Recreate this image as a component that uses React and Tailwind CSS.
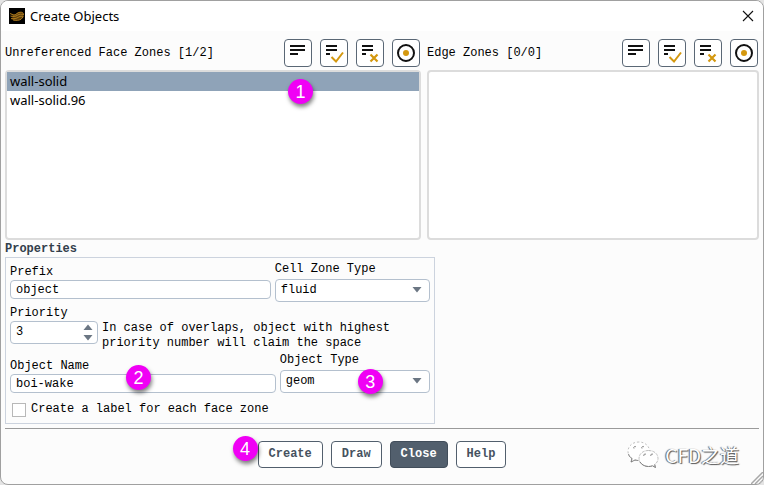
import React, { useState } from "react";

const faceZones = ["wall-solid", "wall-solid.96"];

const AppLogo = () => (
  <svg viewBox="0 0 16 16" className="h-4 w-4 bg-black" aria-hidden="true">
    <path d="M1 5.500l4 1.500 5-3 3.500 0.500 1.500 2-1 3-3 2.500-5 0.500-4-1.500 2-1-2.500-1.500 2.500-0.500z" fill="#5c3f0c" />
    <g fill="none" stroke="#c48a22" strokeWidth="0.8">
      <path d="M1 5.500l4 1.500c2 0 3-2.500 6-2.800s3.500 1.300 3.500 2.800" />
      <path d="M1.500 8c3 .8 5 .6 7-.8s4-1.200 5.500-.2" />
      <path d="M2 10.500c3 .6 5.500 0 7.500-1.300s3.500-1.200 4.500-.2" />
      <path d="M4 12c3 .8 6 .5 8-.7l2.500-2.800" />
    </g>
  </svg>
);

const ListLines = ({ mark }) => (
  <svg viewBox="0 0 26 26" className="h-[26px] w-[26px]" aria-hidden="true">
    <g stroke="#111" strokeWidth="2">
      <path d={mark ? "M5 6h11" : "M5 6h15"} />
      <path d={mark ? "M5 10h11" : "M5 10h15"} />
      <path d={mark ? "M5 14h4" : "M5 14h8"} />
    </g>
    {mark === "check" && (
      <path d="M10.500 17l4.500 4.500 7-9" fill="none" stroke="#d4980f" strokeWidth="2" />
    )}
    {mark === "cross" && (
      <path d="M13.500 14.500l7 7M20.500 14.500l-7 7" fill="none" stroke="#d4980f" strokeWidth="2.200" />
    )}
  </svg>
);

const TargetIcon = () => (
  <svg viewBox="0 0 26 26" className="h-[26px] w-[26px]" aria-hidden="true">
    <circle cx="13" cy="13" r="8" fill="none" stroke="#111" strokeWidth="2" />
    <circle cx="13" cy="13" r="3" fill="#d4980f" />
  </svg>
);

const IconButton = ({ label, children }) => (
  <button
    type="button"
    aria-label={label}
    className="flex h-7 w-7 items-center justify-center rounded border border-[#5a6775] bg-white"
  >
    {children}
  </button>
);

const ZoneToolbar = () => (
  <div className="flex gap-2">
    <IconButton label="List all">
      <ListLines />
    </IconButton>
    <IconButton label="Select all">
      <ListLines mark="check" />
    </IconButton>
    <IconButton label="Deselect all">
      <ListLines mark="cross" />
    </IconButton>
    <IconButton label="Highlight">
      <TargetIcon />
    </IconButton>
  </div>
);

const ZoneList = ({ title, items, selected, onSelect }) => (
  <>
    <div className="flex items-center justify-between pr-px">
      <h2>{title}</h2>
      <ZoneToolbar />
    </div>
    <ul
      role="listbox"
      aria-label={title}
      className="mt-[3px] h-[170px] rounded-sm border-2 border-[#dcdcdc] bg-white font-['Noto_Sans',sans-serif] text-[13px] leading-[19px]"
    >
      {items.map((item) => (
        <li
          key={item}
          role="option"
          aria-selected={item === selected}
          onClick={() => onSelect(item)}
          className={`px-[3px] ${item === selected ? "bg-[#8fa3b8]" : ""}`}
        >
          {item}
        </li>
      ))}
    </ul>
  </>
);

const Marker = ({ className, children }) => (
  <span
    className={`absolute flex h-[25px] w-[25px] items-center justify-center rounded-full bg-[#f000f5] font-['Liberation_Sans',sans-serif] text-[18px] leading-none text-white shadow-[1px_3px_4px_rgba(0,0,0,0.5)] ${className}`}
  >
    {children}
  </span>
);

const TextField = ({ id, label, defaultValue }) => (
  <div className="min-w-0 flex-1">
    <label htmlFor={id} className="block">
      {label}
    </label>
    <input
      id={id}
      type="text"
      defaultValue={defaultValue}
      className="block h-[19px] w-full rounded border border-[#b4c0ce] bg-white px-[5px]"
    />
  </div>
);

const SelectField = ({ id, label, options }) => (
  <div>
    <label htmlFor={id} className="mb-[2px] block">
      {label}
    </label>
    <div className="relative">
      <select
        id={id}
        className="block h-[23px] w-full appearance-none rounded border border-[#b4c0ce] bg-white px-[5px]"
      >
        {options.map((option) => (
          <option key={option}>{option}</option>
        ))}
      </select>
      <svg
        viewBox="0 0 10 6"
        className="pointer-events-none absolute top-2 right-2 h-[6px] w-[10px]"
        aria-hidden="true"
      >
        <path d="M0.500 0h9L5 5.500z" fill="#6b7683" />
      </svg>
    </div>
  </div>
);

const PriorityField = () => {
  const [priority, setPriority] = useState(3);

  return (
    <div className="mt-1">
      <label htmlFor="priority" className="block">
        Priority
      </label>
      <div className="flex items-start gap-1">
        <div className="flex h-[23px] w-[88px] shrink-0 rounded border border-[#b4c0ce] bg-white">
          <input
            id="priority"
            type="text"
            inputMode="numeric"
            value={priority}
            onChange={(e) => setPriority(Number(e.target.value) || 0)}
            className="min-w-0 flex-1 px-[5px]"
          />
          <div className="flex w-[14px] flex-col items-start justify-between py-[2px]">
            <button type="button" aria-label="Increase" onClick={() => setPriority(priority + 1)}>
              <svg viewBox="0 0 10 6" className="h-[6px] w-[10px]">
                <path d="M0.500 6h9L5 0.500z" fill="#6b7683" />
              </svg>
            </button>
            <button type="button" aria-label="Decrease" onClick={() => setPriority(priority - 1)}>
              <svg viewBox="0 0 10 6" className="h-[6px] w-[10px]">
                <path d="M0.500 0h9L5 5.500z" fill="#6b7683" />
              </svg>
            </button>
          </div>
        </div>
        <p>
          In case of overlaps, object with highest
          <br />
          priority number will claim the space
        </p>
      </div>
    </div>
  );
};

const ActionButton = ({ primary, children }) => (
  <button
    type="button"
    className={`h-[27px] rounded border px-[10px] font-bold ${
      primary
        ? "border-[#414d5a] bg-[#525f6d] text-white"
        : "border-[#525f6d] bg-white text-[#46525f]"
    }`}
  >
    {children}
  </button>
);

const Watermark = () => (
  <div className="flex items-center gap-[6px]">
    <svg viewBox="0 0 32 28" className="h-7 w-8" aria-hidden="true">
      <g fill="#fff" stroke="#b0b0b0" strokeWidth="0.8">
        <path
          d="M12 1C5.500 1 1 5 1 10.500c0 3 1.500 5.500 4 7L4 21l4-2c1.500.5 3 .6 5 .5C22 19 23 14 22.500 9 21.500 4 17 1 12 1z"
          strokeDasharray="2 2"
        />
        <path
          d="M21.500 9.500c-5.500 0-9.500 3.500-9.500 8s4 8 9.500 8c1.500 0 2.700-.2 4-.7l3 1.700-.8-3c2-1.500 3.300-3.500 3.300-6 0-4.500-4-8-9.500-8z"
          strokeDasharray="3 1"
        />
      </g>
      <path
        d="M1.500 13c.5 2 1.700 3.500 3.500 4.500L4 21l4-2 3 .5M13 21c2 3 5 4.500 8.500 4.500 1.500 0 2.700-.2 4-.7l3 1.700-.8-3"
        fill="none"
        stroke="#777"
        strokeWidth="0.9"
      />
      <g fill="none" stroke="#777" strokeWidth="0.9">
        <path d="M7 7.500a1.200 1.200 0 0 1 2-1.500M15 7.500a1.200 1.200 0 0 1 2-1.500" />
        <path d="M17 15a1.200 1.200 0 0 1 2-1.500M24 15a1.200 1.200 0 0 1 2-1.500" />
      </g>
    </svg>
    <span className="font-['Noto_Sans_CJK_SC',sans-serif] text-[19px] leading-6 text-white [text-shadow:-1px_0_1px_#555,1px_1px_1px_#555]">
      CFD之道
    </span>
  </div>
);

export default function App() {
  const [selected, setSelected] = useState("wall-solid");

  return (
    <div className="min-h-screen bg-[#e4e4e4]">
      <div className="relative flex min-h-screen flex-col overflow-hidden rounded-lg border border-[#a0a0a0] bg-[#fcfcfc] font-['Liberation_Mono',monospace] text-[12px] leading-[15px] text-black">
        <header className="flex h-[30px] items-center justify-between bg-white pr-[9px] pl-2">
          <div className="flex items-center gap-[5px]">
            <AppLogo />
            <h1 className="font-['Noto_Sans',sans-serif] text-[13px]">Create Objects</h1>
          </div>
          <button type="button" aria-label="Close window">
            <svg viewBox="0 0 12 12" className="h-3 w-3">
              <path d="M1 1l10 10M11 1L1 11" stroke="#111" strokeWidth="1.100" />
            </svg>
          </button>
        </header>

        <main className="px-1 pt-2">
          <div className="flex gap-[6px]">
            <section className="relative min-w-0 flex-[416]">
              <ZoneList
                title="Unreferenced Face Zones [1/2]"
                items={faceZones}
                selected={selected}
                onSelect={setSelected}
              />
              <Marker className="top-10 left-[283px]">1</Marker>
            </section>
            <section className="min-w-0 flex-[332]">
              <ZoneList title="Edge Zones [0/0]" items={[]} />
            </section>
          </div>

          <h2 className="mt-[2px] font-bold text-[#333f4c]">Properties</h2>
          <section className="w-[57%] border border-[#ccd3de] px-1 pt-1 pb-[6px]">
            <div className="flex items-center gap-1">
              <TextField id="prefix" label="Prefix" defaultValue="object" />
              <div className="w-[155px]">
                <SelectField id="cell-zone-type" label="Cell Zone Type" options={["fluid", "solid"]} />
              </div>
            </div>

            <PriorityField />

            <div className="mt-[2px] flex items-end gap-1">
              <div className="relative flex flex-1">
                <TextField id="object-name" label="Object Name" defaultValue="boi-wake" />
                <Marker className="top-[6px] left-[116px]">2</Marker>
              </div>
              <div className="relative w-[150px]">
                <SelectField id="object-type" label="Object Type" options={["geom", "mesh"]} />
                <Marker className="top-4 left-[78px]">3</Marker>
              </div>
            </div>

            <div className="mt-[9px] flex items-center gap-[5px] pl-[2px]">
              <input
                id="face-label"
                type="checkbox"
                className="h-[14px] w-[14px] appearance-none border border-[#b8b8b8] bg-white checked:bg-[#525f6d]"
              />
              <label htmlFor="face-label">Create a label for each face zone</label>
            </div>
          </section>
        </main>

        <footer className="mx-1 mt-1 grid grid-cols-[1fr_auto_1fr] items-center border-t border-[#9a9a9a] pt-2 pb-3">
          <div />
          <div className="relative flex gap-2 py-1">
            <Marker className="top-[-1px] left-[-25px]">4</Marker>
            <ActionButton>Create</ActionButton>
            <ActionButton>Draw</ActionButton>
            <ActionButton primary>Close</ActionButton>
            <ActionButton>Help</ActionButton>
          </div>
          <div className="flex justify-end pr-5">
            <Watermark />
          </div>
        </footer>

        <svg viewBox="0 0 12 12" className="absolute right-0 bottom-0 h-3 w-3" aria-hidden="true">
          <path d="M0 12L12 0M4 12L12 4M8 12L12 8" stroke="#a8a8a8" strokeWidth="1.500" />
        </svg>
      </div>
    </div>
  );
}
